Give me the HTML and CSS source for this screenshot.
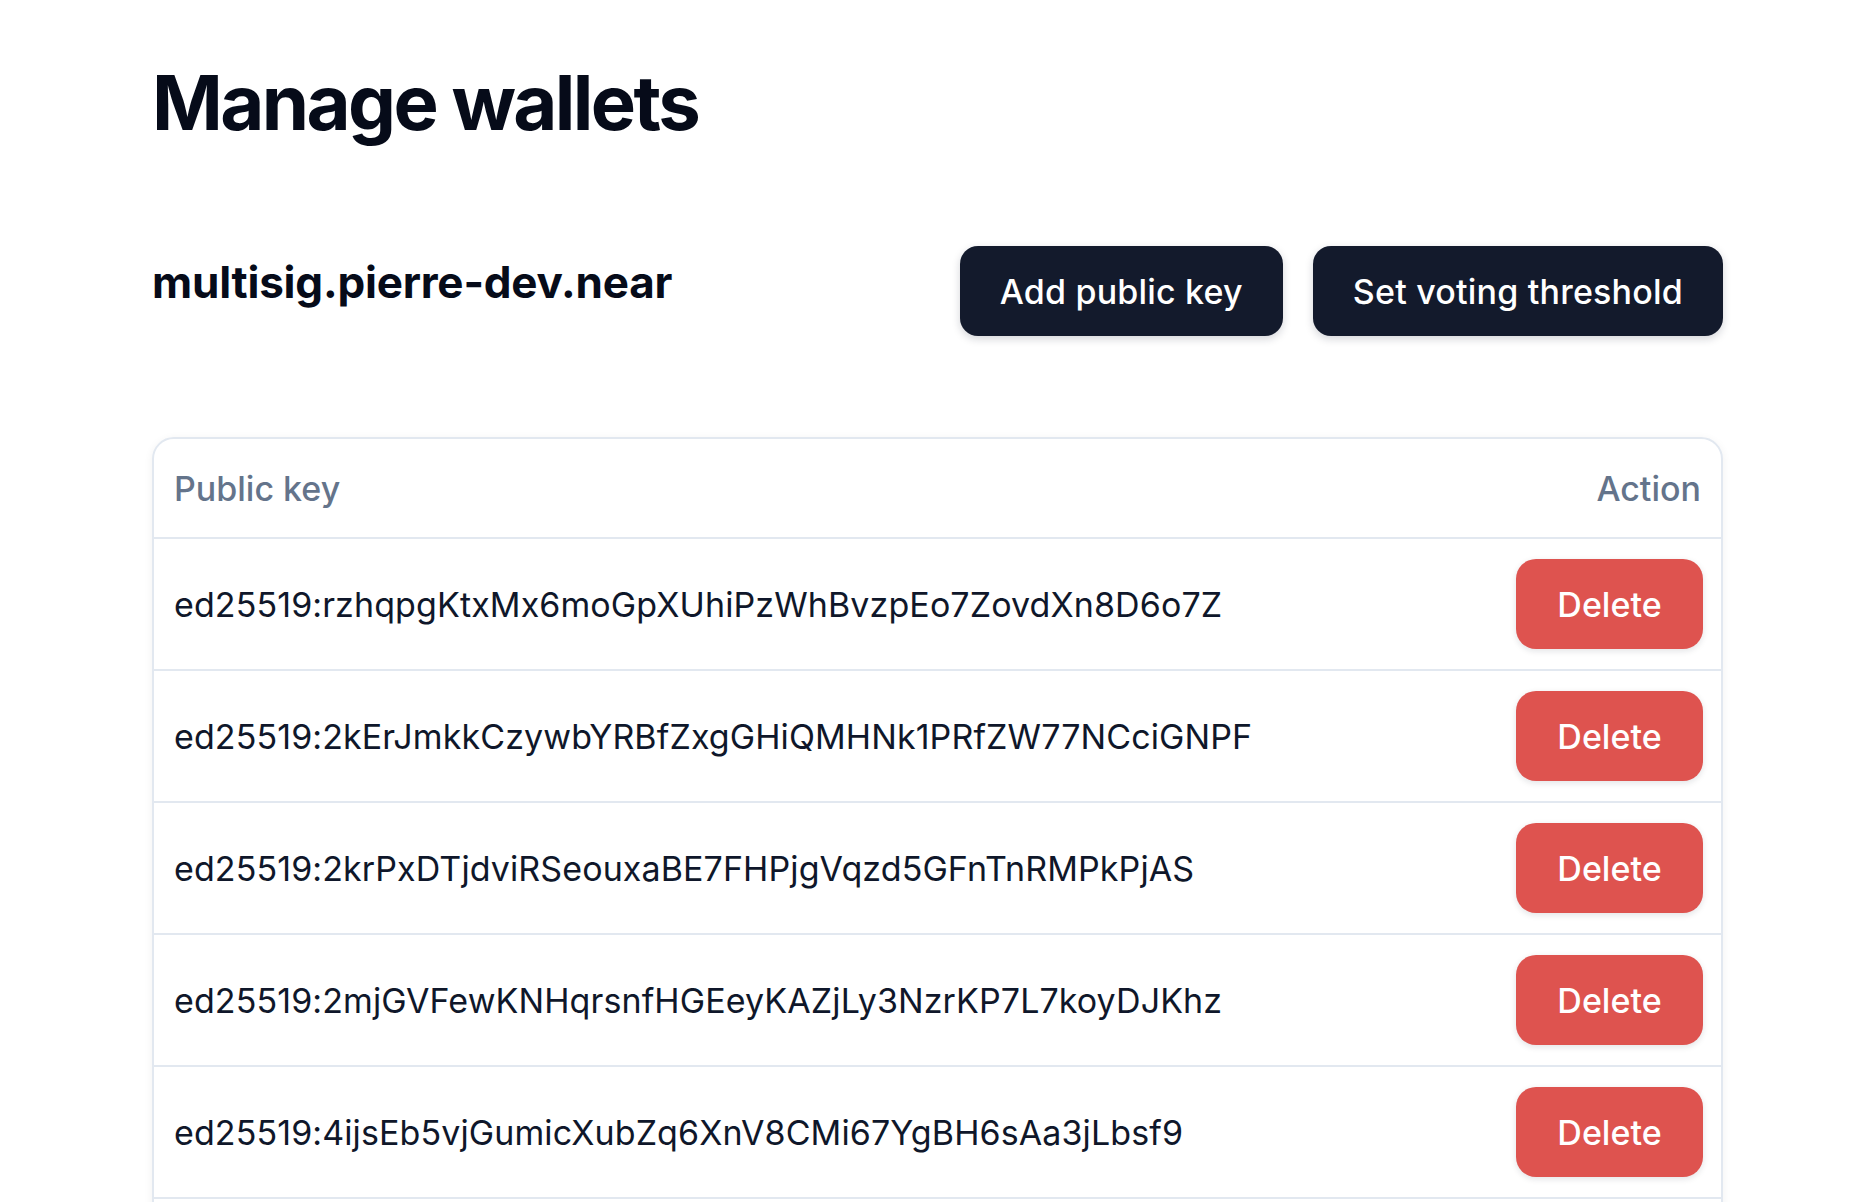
FILE: index.html
```html
<!DOCTYPE html>
<html lang="en">
<head>
<meta charset="utf-8">
<title>Manage wallets</title>
<link rel="stylesheet" href="styles.css">
</head>
<body>
<main class="page">
  <h1 class="title">Manage wallets</h1>
  <div class="account-bar">
    <h2 class="account">multisig.pierre-dev.near</h2>
    <div class="actions">
      <button class="btn btn-dark">Add public key</button>
      <button class="btn btn-dark">Set voting threshold</button>
    </div>
  </div>
  <div class="table">
    <div class="row head">
      <span class="cell-key">Public key</span>
      <span class="cell-action">Action</span>
    </div>
    <div class="row">
      <span class="cell-key">ed25519:rzhqpgKtxMx6moGpXUhiPzWhBvzpEo7ZovdXn8D6o7Z</span>
      <button class="btn btn-red">Delete</button>
    </div>
    <div class="row">
      <span class="cell-key">ed25519:2kErJmkkCzywbYRBfZxgGHiQMHNk1PRfZW77NCciGNPF</span>
      <button class="btn btn-red">Delete</button>
    </div>
    <div class="row">
      <span class="cell-key">ed25519:2krPxDTjdviRSeouxaBE7FHPjgVqzd5GFnTnRMPkPjAS</span>
      <button class="btn btn-red">Delete</button>
    </div>
    <div class="row">
      <span class="cell-key">ed25519:2mjGVFewKNHqrsnfHGEeyKAZjLy3NzrKP7L7koyDJKhz</span>
      <button class="btn btn-red">Delete</button>
    </div>
    <div class="row">
      <span class="cell-key">ed25519:4ijsEb5vjGumicXubZq6XnV8CMi67YgBH6sAa3jLbsf9</span>
      <button class="btn btn-red">Delete</button>
    </div>
    <div class="row">
      <span class="cell-key">ed25519:5qWmZkHxLpT3nRcVbJ8sYdF2gAeU4oKiN7wXzQ9hMvEu</span>
      <button class="btn btn-red">Delete</button>
    </div>
  </div>
</main>
</body>
</html>
```

FILE: styles.css
```css
html, body {
  margin: 0;
  padding: 0;
  background: #ffffff;
}

body {
  font-family: Inter, "Noto Sans", "Liberation Sans", sans-serif;
  color: #0f172a;
}

.page {
  padding: 60px 133px 0 152px;
}

.title {
  margin: 0 0 102px 0;
  font-size: 76px;
  line-height: 84px;
  font-weight: 700;
  color: #060b19;
  letter-spacing: -2.6px;
}

.account-bar {
  display: flex;
  justify-content: space-between;
  align-items: flex-start;
  margin-bottom: 101px;
}

.account {
  margin: 7px 0 0 0;
  font-size: 44px;
  line-height: 58px;
  font-weight: 700;
  color: #060b19;
  letter-spacing: -0.2px;
}

.actions {
  display: flex;
  gap: 30px;
}

.btn {
  font-family: inherit;
  border: none;
  cursor: pointer;
  display: inline-flex;
  align-items: center;
  justify-content: center;
  height: 90px;
  font-size: 34px;
  font-weight: 500;
  color: #ffffff;
  border-radius: 18px;
}

.btn-dark {
  background: #131a2c;
  padding: 0 40px;
  letter-spacing: 0.2px;
  box-shadow: 0 3px 8px rgba(15, 23, 42, 0.18);
}

.btn-red {
  background: #de534f;
  width: 187px;
  border-radius: 20px;
  box-shadow: 0 2px 6px rgba(15, 23, 42, 0.12);
}

.table {
  border: 2px solid #e2e8f0;
  border-radius: 22px;
  box-shadow: 0 2px 10px rgba(15, 23, 42, 0.06);
  overflow: hidden;
}

.row {
  display: flex;
  justify-content: space-between;
  align-items: center;
  height: 130px;
  padding: 0 18px 0 20px;
  border-bottom: 2px solid #e2e8f0;
}

.row.head {
  height: 98px;
  padding-right: 20px;
}

.head span {
  font-size: 34px;
  font-weight: 500;
  color: #64748b;
  letter-spacing: 0;
}

.cell-key {
  font-size: 34px;
  font-weight: 400;
  color: #0f172a;
  letter-spacing: 0.1px;
}
```
